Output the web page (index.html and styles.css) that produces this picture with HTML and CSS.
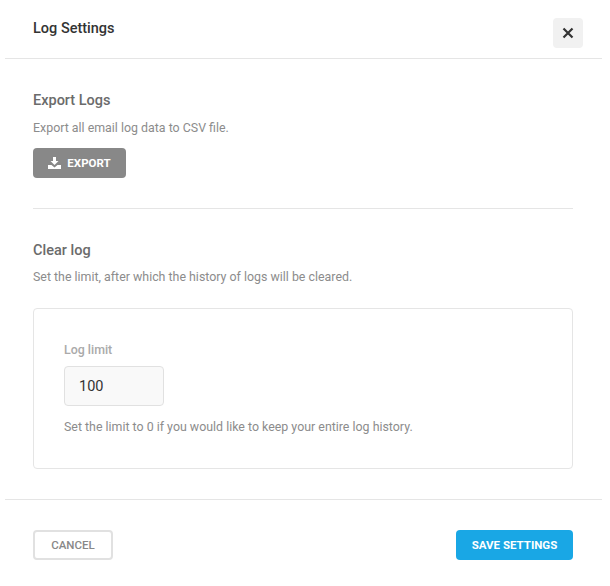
FILE: index.html
```html
<!DOCTYPE html>
<html lang="en">
<head>
<meta charset="utf-8">
<title>Log Settings</title>
<link rel="stylesheet" href="styles.css">
</head>
<body>
<div class="modal">
  <header class="modal-header">
    <h1 class="modal-title">Log Settings</h1>
    <button class="close-btn" type="button" aria-label="Close">
      <svg width="12" height="12" viewBox="0 0 12 12" aria-hidden="true"><path d="M1.500 1.500L10.500 10.500M10.500 1.500L1.500 10.500" stroke="#333" stroke-width="2.200" fill="none"/></svg>
    </button>
  </header>
  <main class="modal-body">
    <section class="export">
      <h2 class="section-title">Export Logs</h2>
      <p class="section-desc">Export all email log data to CSV file.</p>
      <button class="btn btn-export" type="button">
        <svg width="13" height="12" viewBox="0 0 13 12" aria-hidden="true"><path d="M5 0h3v4h2.500L6.500 8 2.500 4H5z" fill="#fff"/><path d="M0 8h3.500l3 2.500 3-2.500H13v4H0z" fill="#fff"/></svg>
        EXPORT
      </button>
    </section>
    <section class="clear">
      <h2 class="section-title">Clear log</h2>
      <p class="section-desc">Set the limit, after which the history of logs will be cleared.</p>
      <div class="limit-box">
        <label class="field-label" for="limit">Log limit</label>
        <input class="field-input" id="limit" type="text" value="100">
        <p class="field-help">Set the limit to 0 if you would like to keep your entire log history.</p>
      </div>
    </section>
  </main>
  <footer class="modal-footer">
    <button class="btn btn-cancel" type="button">CANCEL</button>
    <button class="btn btn-save" type="button">SAVE SETTINGS</button>
  </footer>
</div>
</body>
</html>
```
FILE: styles.css
```css
* { box-sizing: border-box; }
html, body { margin: 0; padding: 0; background: #fff; }
body { font-family: Roboto, "Liberation Sans", sans-serif; color: #888; height: 586px; overflow: hidden; }
.modal { margin-left: 5px; width: 597px; }
.modal-header {
  height: 59px;
  border-bottom: 1px solid #e5e5e5;
  padding: 18px 19px 0 28px;
  display: flex;
  justify-content: space-between;
  align-items: flex-start;
}
.modal-title { margin: 1px 0 0; font-size: 14.5px; font-weight: 500; line-height: 20px; color: #333; }
.close-btn {
  width: 30px; height: 30px; padding: 0; border: 0; border-radius: 4px;
  background: #f1f1f1; display: flex; align-items: center; justify-content: center;
}
.modal-body { padding: 32px 29px 30px 28px; }
.export { padding-bottom: 30px; border-bottom: 1px solid #e5e5e5; }
.clear { padding-top: 32px; }
.section-title { margin: 0; font-size: 14.5px; font-weight: 500; line-height: 20px; color: #6b6b6b; }
.section-desc { margin: 6px 0 0; font-size: 12.4px; line-height: 20px; color: #8c8c8c; }
.export .section-desc { margin-top: 7px; }
.btn {
  height: 30px; border-radius: 4px; font-family: inherit; font-size: 11.5px; font-weight: 500;
  padding: 0; display: flex; align-items: center; justify-content: center;
}
.btn-export {
  margin-top: 10px; width: 93px; border: 0; background: #888; color: #fff; gap: 6px; font-weight: 700;
}
.limit-box {
  margin-top: 21px; height: 161px; border: 1px solid #e5e5e5; border-radius: 4px;
  padding: 31px 30px 0;
}
.field-label { display: block; font-size: 12.4px; font-weight: 500; line-height: 20px; color: #aaa; }
.field-input {
  display: block; margin-top: 6px; width: 100px; height: 40px; padding: 0 14px;
  border: 1px solid #e1e1e1; border-radius: 4px; background: #f9f9f9;
  font-family: inherit; font-size: 14.5px; color: #333; outline: none;
}
.field-help { margin: 11px 0 0; font-size: 12.4px; line-height: 20px; color: #8c8c8c; }
.modal-footer {
  border-top: 1px solid #e5e5e5; padding: 30px 29px 0 28px;
  display: flex; justify-content: space-between;
}
.btn-cancel { width: 80px; background: #fff; border: 2px solid #e1e1e1; color: #888; }
.btn-save { width: 117px; border: 0; background: #19a7e5; color: #fff; font-weight: 700; }
```
